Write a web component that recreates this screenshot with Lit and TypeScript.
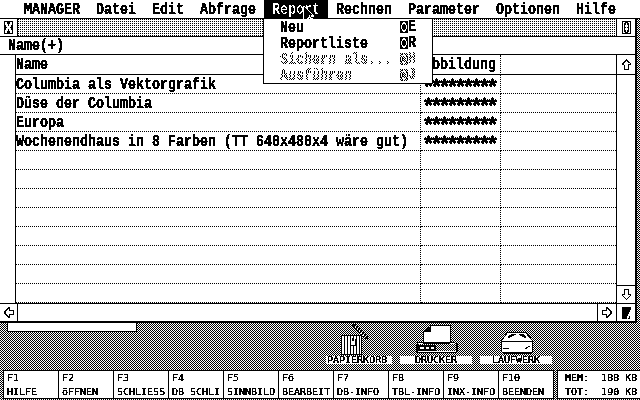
import { LitElement, html, css, svg } from "lit";
import { customElement } from "lit/decorators.js";

const keyIcon = (dim: boolean) => html`<svg class="kg" width="8" height="12" viewBox="0 0 8 12" shape-rendering="crispEdges">
  <path d="M0 0h8v12H0z" fill="#000"/>
  <path d="M3 1h2v1h1v2h1v4H6v2H5v1H3v-1H2V8H1V4h1V2h1z" fill="#fff"/>
  <path d="M3 3h2v1h1v4H5v1H3V8H2V4h1z" fill="#000"/>
  ${dim ? svg`<path d="M1 0h1v1H1zM3 0h1v1H3zM5 0h1v1H5zM7 0h1v1H7zM0 1h1v1H0zM6 1h1v1H6zM1 2h1v1H1zM7 2h1v1H7zM0 3h1v1H0zM4 3h1v1H4zM3 4h1v1H3zM5 4h1v1H5zM4 5h1v1H4zM3 6h1v1H3zM5 6h1v1H5zM4 7h1v1H4zM3 8h1v1H3zM0 9h1v1H0zM7 8h1v1H7zM1 10h1v1H1zM6 10h1v1H6zM0 11h1v1H0zM3 11h1v1H3zM5 11h1v1H5zM7 11h1v1H7z" fill="#fff"/>` : ""}
</svg>`;

const windowGlyph = html`<svg width="9" height="13" viewBox="0 0 9 13" shape-rendering="crispEdges">
  <path d="M0 0h9v13H0z" fill="#000"/>
  <path d="M1 1h2v2h1v2h1V3h1V1h2v3H7v2H6v1h1v2h1v3H6v-2H5V8H4v2H3v2H1V9h1V7h1V6H2V4H1z" fill="#fff"/>
</svg>`;

const fullGlyph = html`<svg width="9" height="13" viewBox="0 0 9 13" shape-rendering="crispEdges">
  <path d="M0 0h9v13H0z" fill="#000"/>
  <path d="M1 1h2v1H2v9h1v1H1zM8 1H6v1h1v9H6v1h2z" fill="#fff"/>
  <path d="M4 2h1v2h1v2H5v1h1v2H5v2H4V9H3V7h1V6H3V4h1z" fill="#fff"/>
</svg>`;

const arrow = (d: string) => html`<svg width="11" height="12" viewBox="0 0 11 12" shape-rendering="crispEdges"><path d=${d} fill="#000" fill-rule="evenodd"/></svg>`;
const UP = "M5 0h1v1h1v1h1v1h1v1h1v2H8v5H3V6H1V4h1V3h1V2h1V1h1zM5 2v1H4v1H3v1H2h1v1h1v4h3V5h2V4H7V3H6V2z";
const DOWN = "M3 0h5v5h2v2H9v1H8v1H7v1H6v1H5v-1H4V9H3V8H2V7H1V5h2zM4 1v5H2v1h1v1h1v1h1v1h1V9h1V8h1V7h1V6H7V1z";
const LEFT = "M5 0h2v3h4v5H7v3H5v-1H4V9H3V8H2V7H1V4h1V3h1V2h1V1h1zM6 2H5v1H4v1H3v3h1v1h1v1h1V7h4V4H6z";
const RIGHT = "M4 0h2v1h1v1h1v1h1v1h1v3H9v1H8v1H7v1H6v1H4V8H0V3h4zM5 2v2H1v3h4v2h1V8h1V7h1V4H7V3H6V2z";

const rows = [
  "Columbia als Vektorgrafik",
  "Düse der Columbia",
  "Europa",
  "Wochenendhaus in 8 Farben (TT 640x480x4 wäre gut)",
  "", "", "", "", "", "", "", "",
];

const menus = ["MANAGER", "Datei", "Edit", "Abfrage", "Report", "Rechnen", "Parameter", "Optionen", "Hilfe"];
const fkeys = [
  ["F1", "HILFE"], ["F2", "öFFNEN"], ["F3", "SCHLIESS"], ["F4", "DB SCHLI"], ["F5", "SINNBILD"],
  ["F6", "BEARBEIT"], ["F7", "DB-INFO"], ["F8", "TBL-INFO"], ["F9", "INX-INFO"], ["F10", "BEENDEN"],
];

@customElement("app-root")
export class AppRoot extends LitElement {
  static styles = css`
    :host { display: block; width: 640px; height: 400px; overflow: hidden; }
    * { box-sizing: border-box; }
    .filterdef { position: absolute; width: 0; height: 0; }
    .screen {
      position: relative; width: 640px; height: 400px; overflow: hidden; display: flex; flex-direction: column;
      background: url("data:image/svg+xml,%3Csvg xmlns='http://www.w3.org/2000/svg' width='2' height='2' shape-rendering='crispEdges'%3E%3Crect width='2' height='2' fill='%23fff'/%3E%3Cpath d='M0 0h1v1H0zM1 1h1v1H1z' fill='%23000'/%3E%3C/svg%3E") 0 0 / 2px 2px;
      filter: url(#bw);
      font: 700 13.33px/16px "Liberation Mono", monospace; color: #000; white-space: pre;
    }
    .t { display: inline-block; transform: scaleY(1.27); }
    .menubar { flex: none; height: 19px; padding-left: 16px; display: flex; background: #fff; border-bottom: 1px solid #000; }
    .mi { height: 18px; padding: 1px 8px 0; line-height: 17px; }
    .mi.on { background: #000; color: #fff; }
    .win { flex: none; width: 637px; height: 304px; background: #fff; border-right: 2px solid #000; border-bottom: 2px solid #000; display: flex; flex-direction: column; }
    .title { flex: none; height: 18px; display: flex; border-bottom: 1px solid #000; }
    .box { flex: none; display: flex; align-items: center; justify-content: center; background: #fff; }
    .closebox { width: 18px; border-right: 1px solid #000; }
    .fullbox { width: 19px; border-left: 1px solid #000; }
    .pat { flex: 1; background: url("data:image/svg+xml,%3Csvg xmlns='http://www.w3.org/2000/svg' width='2' height='2' shape-rendering='crispEdges'%3E%3Crect width='2' height='2' fill='%23fff'/%3E%3Cpath d='M0 0h1v1H0z' fill='%23000'/%3E%3C/svg%3E") 0 0 / 2px 2px; }
    .info { flex: none; height: 18px; padding-left: 8px; border-bottom: 1px solid #000; line-height: 18px; }
    .body { flex: 1; min-height: 0; display: flex; }
    .gutter { flex: none; width: 16px; border-right: 1px solid #000; }
    .table { flex: 1; display: grid; grid-template-columns: 405px 80px 1fr; grid-template-rows: 20px repeat(12, 19px); }
    .c { border-bottom: 1px dotted #000; border-right: 1px dotted #000; overflow: visible; line-height: 20px; }
    .c:nth-child(3n) { border-right: 0; }
    .h { border-bottom: 1px solid #000; }
    .c2 { padding-left: 3px; }
    .stars { display: block; font-size: 22px; letter-spacing: -5.2px; line-height: 20px; transform: translate(-2px, 4px) scaleY(.9); -webkit-text-stroke: .3px #000; }
    .vs { flex: none; width: 19px; border-left: 1px solid #000; display: flex; flex-direction: column; }
    .vbtn { flex: none; height: 20px; border-bottom: 1px solid #000; }
    .vtrack { flex: 1; }
    .vbtn.dn { height: 18px; border-bottom: 0; border-top: 1px solid #000; }
    .hs { flex: none; height: 18px; border-top: 1px solid #000; display: flex; }
    .lbtn { width: 18px; border-right: 1px solid #000; }
    .htrack { flex: 1; }
    .rbtn { width: 19px; border-left: 1px solid #000; }
    .sizer { width: 19px; border-left: 1px solid #000; }
    .dropdown { position: absolute; left: 263px; top: 18px; width: 170px; height: 66px; background: #fff; border: 1px solid #000; display: flex; flex-direction: column; padding-left: 16px; padding-right: 16px; }
    .dd { height: 16px; flex: none; display: flex; justify-content: space-between; line-height: 18px; }
    .dd .sc { display: flex; align-items: center; }
    .dim .t {
      color: transparent;
      background: url("data:image/svg+xml,%3Csvg xmlns='http://www.w3.org/2000/svg' width='2' height='2' shape-rendering='crispEdges'%3E%3Crect width='2' height='2' fill='%23fff'/%3E%3Cpath d='M0 0h1v1H0zM1 1h1v1H1z' fill='%23000'/%3E%3C/svg%3E") 0 0 / 2px 2px;
      -webkit-background-clip: text; background-clip: text;
    }
    .kg { display: block; }
    .cursor { position: absolute; left: 303px; top: 6px; }
    .desk { flex: 1; position: relative; }
    .slot { position: absolute; left: 7px; top: 0; width: 130px; height: 9px; background: #fff; border: 1px solid #000; border-top: 0; }
    .ico { position: absolute; }
    .trash { left: 340px; top: 1px; }
    .printer { left: 414px; top: 2px; }
    .drive { left: 500px; top: 8px; }
    .lab { position: absolute; top: 33px; width: 72px; height: 8px; background: #fff; text-align: center; font: 400 10px/8px "DejaVu Sans Mono", monospace; }
    .l1 { left: 326px; width: 66px; text-align: left; padding-left: 1px; }
    .l2 { left: 400px; }
    .l3 { left: 480px; }
    .small { display: inline-block; transform: scale(1, .85); }
    .fbar { flex: none; position: absolute; left: 3px; top: 370px; width: 637px; display: flex; }
    .fk { flex: none; width: 55px; height: 29px; background: #fff; border: 1px solid #000; border-right: 0; padding: 2px 0 0 3px; display: flex; flex-direction: column; justify-content: space-between; font: 400 10px/10px "DejaVu Sans Mono", monospace; }
    .fk:nth-child(10) { border-right: 1px solid #000; width: 56px; }
    .fk div { height: 12px; }
    .fk div:last-child { height: 11px; }
    .mem { flex: none; margin-left: 3px; width: 83px; height: 29px; background: #fff; border: 1px solid #000; border-right: 0; padding: 2px 0 0 7px; display: flex; flex-direction: column; justify-content: space-between; font: 400 10px/10px "DejaVu Sans Mono", monospace; }
    .mem div { height: 12px; }
    .mem div:last-child { height: 11px; }
  `;

  render() {
    return html`
      <svg class="filterdef" aria-hidden="true"><filter id="bw" x="0" y="0" width="100%" height="100%" color-interpolation-filters="sRGB">
        <feComponentTransfer>
          <feFuncR type="discrete" tableValues="0 0 0 1"/><feFuncG type="discrete" tableValues="0 0 0 1"/><feFuncB type="discrete" tableValues="0 0 0 1"/>
        </feComponentTransfer></filter></svg>
      <div class="screen">
        <div class="menubar">
          ${menus.map((m) => html`<div class="mi ${m === "Report" ? "on" : ""}"><span class="t">${m}</span></div>`)}
        </div>
        <div class="win">
          <div class="title">
            <div class="box closebox">${windowGlyph}</div>
            <div class="pat"></div>
            <div class="box fullbox">${fullGlyph}</div>
          </div>
          <div class="info"><span class="t">Name(+)</span></div>
          <div class="body">
            <div class="gutter"></div>
            <div class="table">
              <div class="c h"><span class="t">Name</span></div>
              <div class="c h c2"><span class="t">Abbildung</span></div>
              <div class="c h"></div>
              ${rows.map((r) => html`
                <div class="c"><span class="t">${r}</span></div>
                <div class="c c2">${r ? html`<span class="stars">*********</span>` : ""}</div>
                <div class="c"></div>`)}
            </div>
            <div class="vs">
              <div class="box vbtn">${arrow(UP)}</div>
              <div class="vtrack"></div>
              <div class="box vbtn dn">${arrow(DOWN)}</div>
            </div>
          </div>
          <div class="hs">
            <div class="box lbtn">${arrow(LEFT)}</div>
            <div class="htrack"></div>
            <div class="box rbtn">${arrow(RIGHT)}</div>
            <div class="box sizer">
              <svg width="9" height="12" viewBox="0 0 9 12" shape-rendering="crispEdges"><path d="M0 0h9v3H8v2H7v2H6v2H5v3H0z" fill="#000"/><path d="M7 9h1v3H6v-1h1z" fill="#000"/></svg>
            </div>
          </div>
        </div>
        <div class="desk">
          <div class="slot"></div>
          <svg class="ico trash" width="30" height="32" viewBox="0 0 30 32" shape-rendering="crispEdges">
            <path d="M1 11h21v20H1z" fill="#fff"/>
            <path d="M1 11h21v1H1zM1 30h21v1H1zM1 11h1v20H1zM4 11h1v20H4zM7 11h1v20H7zM16 11h1v20h-1zM19 11h1v20h-1zM21 11h1v20h-1zM10 11h1v20h-1zM13 11h1v20h-1z" fill="#000"/>
            <path d="M10 15h6v7h-6z" fill="#fff"/>
            <path d="M10 15h1v6h5v1h-6zM15 15h1v7h-1zM12 14h2v3h-2z" fill="#000"/>
            <path d="M13 0h3v2h2v2h2v2h2v2h2v2h2v2h2v3h-3v-2h-2v-2h-2v-2h-2V8h-2V6h-2V4h-2V2h-1z" fill="#000"/>
            <path d="M15 2h1v2h2v2h2v2h2v2h2v2h2v1h-1v-1h-2v-2h-2V8h-2V6h-2V4h-2z" fill="#fff"/>
          </svg>
          <svg class="ico printer" width="46" height="30" viewBox="0 0 46 30" shape-rendering="crispEdges">
            <defs><pattern id="ck" width="2" height="2" patternUnits="userSpaceOnUse"><rect width="2" height="2" fill="#fff"/><path d="M0 1h1v1H0zM1 0h1v1H1z" fill="#000"/></pattern></defs>
            <path d="M16 1h20v17H9V8h1V7h1V6h1V5h1V4h1V3h1V2h1z" fill="#fff"/>
            <path d="M16 0h21v18h-1V1H16zM16 1h1v6H10v1H9V7h1V6h1V5h1V4h1V3h1V2h1zM9 8h1v10H9z" fill="#000"/>
            <path d="M3 17h38v1h2v1h1v8h-1v1H3v-1H2v-8h1z" fill="#000"/>
            <path d="M4 19h38v7H4z" fill="url(#ck)"/>
            <path d="M4 18h5v1H4zM36 18h5v1h-5zM4 26h38v1H4z" fill="#fff"/>
            <path d="M4 20h18v6H4z" fill="#000"/>
            <path d="M6 22h4v2H6zM12 22h3v2h-3zM17 22h3v2h-3z" fill="#fff"/>
          </svg>
          <svg class="ico drive" width="34" height="24" viewBox="0 0 34 24">
            <path d="M7.5 1.5H25.5L32.5 9.5V20.5L30.5 22.5H3.5L1.5 20.5V9.5Z" fill="#fff" stroke="#000" shape-rendering="crispEdges"/>
            <g shape-rendering="crispEdges" fill="#000">
              <path d="M2 10h30v1H2zM3 21h28v2H3z"/>
              <path d="M11 3h5v1h-2v1h-2v1h-2v1H8V5h1V4h2zM19 3h5v1h1v1h1v2h-2V6h-2V5h-2V4h-1z"/>
              <path d="M3 17h6v1H3zM26 16h2v1h-2zM28 15h2v1h-2zM25 17h2v1h-2z"/>
            </g>
          </svg>
          <div class="lab l1"><span class="small">PAPIERKORB</span></div>
          <div class="lab l2"><span class="small">DRUCKER</span></div>
          <div class="lab l3"><span class="small">LAUFWERK</span></div>
        </div>
        <div class="fbar">
          ${fkeys.map(([a, b]) => html`<div class="fk"><div><span class="small">${a}</span></div><div><span class="small">${b}</span></div></div>`)}
          <div class="mem">
            <div><span class="small">MEM:  188 KB</span></div>
            <div><span class="small">TOT:  190 KB</span></div>
          </div>
        </div>
        <div class="dropdown">
          <div class="dd"><span class="t">Neu</span><span class="sc">${keyIcon(false)}<span class="t">E</span></span></div>
          <div class="dd"><span class="t">Reportliste</span><span class="sc">${keyIcon(false)}<span class="t">R</span></span></div>
          <div class="dd dim"><span class="t">Sichern als...</span><span class="sc">${keyIcon(true)}<span class="t">H</span></span></div>
          <div class="dd dim"><span class="t">Ausführen</span><span class="sc">${keyIcon(true)}<span class="t">J</span></span></div>
        </div>
        <svg class="cursor" width="14" height="16" viewBox="0 0 14 16" shape-rendering="crispEdges">
          <path d="M0 0h2v1h1v1h1v1h1v1h1v1h1v1h1v1h1v1h1v1h1v2H9v1h1v2H8v-1H7v-1H6v1H5v1H0z" fill="#fff"/>
          <path d="M1 1h1v1h1v1h1v1h1v1h1v1h1v1h1v1h1v1H8v2h1v1H8v-1H7v-2H6v2H5v1H4v1H1z" fill="#000"/>
        </svg>
      </div>
    `;
  }
}
